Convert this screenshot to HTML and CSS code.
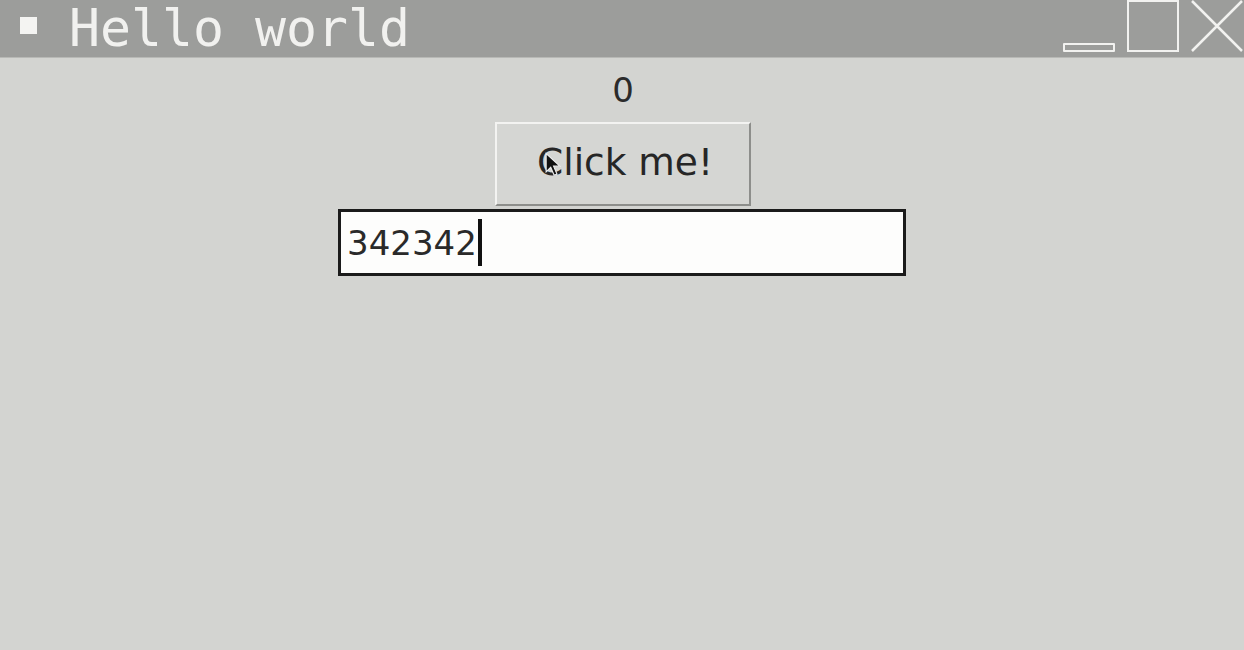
FILE: index.html
```html
<!DOCTYPE html>
<html>
<head>
<meta charset="utf-8">
<link rel="stylesheet" href="styles.css">
</head>
<body>
<div class="window">
  <div class="titlebar">
    <div class="title-left">
      <span class="menu-square"></span>
      <span class="title">Hello world</span>
    </div>
    <div class="controls">
      <span class="btn-min"></span>
      <span class="btn-max"></span>
      <svg class="btn-close" width="54" height="54" viewBox="0 0 54 54"><path d="M2 2 L52 52 M52 2 L2 52" stroke="#f2f2f0" stroke-width="2.5" fill="none"/></svg>
    </div>
  </div>
  <div class="content">
    <div class="label">0</div>
    <div class="button">Click me!
      <svg class="pointer" width="16" height="26" viewBox="0 0 14 22"><path d="M1 1 L1 17 L5 13 L8 20 L10.5 19 L7.5 12 L13 12 Z" fill="#111" stroke="#eee" stroke-width="1"/></svg>
    </div>
    <div class="entry"><span class="entry-text">342342</span><span class="caret"></span></div>
  </div>
</div>
</body>
</html>
```

FILE: styles.css
```css
html, body {
  margin: 0;
  padding: 0;
}
body {
  width: 1244px;
  height: 650px;
  overflow: hidden;
  background: #d3d4d1;
  font-family: "DejaVu Sans", sans-serif;
}
.window {
  display: flex;
  flex-direction: column;
  height: 650px;
}
.titlebar {
  height: 57px;
  background: #9c9d9b;
  border-bottom: 1px solid #b8b9b6;
  display: flex;
  justify-content: space-between;
  align-items: stretch;
}
.title-left {
  display: flex;
  align-items: flex-start;
  padding-left: 20px;
  gap: 32px;
}
.menu-square {
  width: 17px;
  height: 17px;
  background: #f4f4f2;
  margin-top: 17px;
}
.title {
  font-family: "DejaVu Sans Mono", monospace;
  font-size: 51.5px;
  line-height: 52px;
  color: #f1f1ef;
  padding-top: 2px;
}
.controls {
  display: flex;
  align-items: flex-start;
}
.btn-min {
  width: 48px;
  height: 5px;
  border: 2px solid #f2f2f0;
  margin-top: 43px;
  border-radius: 1px;
}
.btn-max {
  width: 48px;
  height: 48px;
  border: 2.5px solid #f2f2f0;
  margin-left: 12px;
}
.btn-close {
  margin-left: 11px;
  margin-top: -1px;
}
.content {
  display: flex;
  flex-direction: column;
  align-items: center;
  padding-top: 12px;
  padding-left: 2px;
}
.label {
  font-size: 34px;
  line-height: 40px;
  color: #2b2b2b;
  height: 52px;
}
.button {
  position: relative;
  box-sizing: border-box;
  width: 256px;
  height: 84px;
  border: 2px solid;
  border-color: #f3f3f1 #8d8e8b #8d8e8b #f3f3f1;
  background: #d5d6d3;
  font-size: 37.5px;
  color: #262626;
  display: flex;
  align-items: center;
  justify-content: center;
  padding-bottom: 4px;
  padding-left: 4px;
}
.pointer {
  position: absolute;
  left: 48px;
  top: 28px;
}
.entry {
  box-sizing: border-box;
  width: 568px;
  height: 67px;
  margin-top: 3px;
  margin-left: -2px;
  border: 3px solid #1b1b1b;
  background: #fdfdfc;
  display: flex;
  align-items: center;
  padding-left: 6px;
}
.entry-text {
  font-size: 34px;
  color: #2a2a2a;
}
.caret {
  width: 4px;
  height: 47px;
  background: #111;
  margin-left: 1px;
}
```
